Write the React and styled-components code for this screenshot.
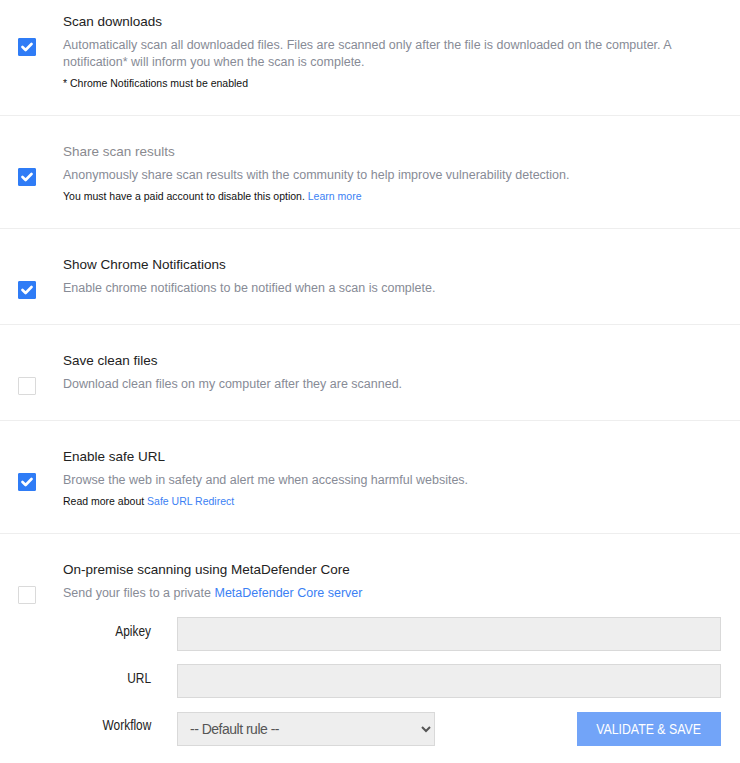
import React from "react";
import styled, { createGlobalStyle } from "styled-components";

const GlobalStyle = createGlobalStyle`
  body {
    margin: 0;
    background: #fff;
    font-family: "Liberation Sans", Arial, sans-serif;
    color: #222;
  }
`;

function Check({ checked }) {
  return (
    <CheckBox $checked={checked}>
      {checked && (
        <svg width="12" height="10" viewBox="0 0 12 10">
          <polyline
            points="1.5,5 4.6,8 10.5,2"
            fill="none"
            stroke="#fff"
            strokeWidth="2.6"
            strokeLinecap="round"
            strokeLinejoin="round"
          />
        </svg>
      )}
    </CheckBox>
  );
}

function App() {
  return (
    <Page>
      <GlobalStyle />
      <Section $first>
        <Check checked />
        <Content>
          <Title>Scan downloads</Title>
          <Desc>
            Automatically scan all downloaded files. Files are scanned only
            after the file is downloaded on the computer. A notification* will
            inform you when the scan is complete.
          </Desc>
          <Note>* Chrome Notifications must be enabled</Note>
        </Content>
      </Section>

      <Section>
        <Check checked />
        <Content>
          <Title $muted>Share scan results</Title>
          <Desc>
            Anonymously share scan results with the community to help improve
            vulnerability detection.
          </Desc>
          <Note>
            You must have a paid account to disable this option.{" "}
            <Link href="#">Learn more</Link>
          </Note>
        </Content>
      </Section>

      <Section>
        <Check checked />
        <Content>
          <Title>Show Chrome Notifications</Title>
          <Desc>
            Enable chrome notifications to be notified when a scan is complete.
          </Desc>
        </Content>
      </Section>

      <Section>
        <Check />
        <Content>
          <Title>Save clean files</Title>
          <Desc>Download clean files on my computer after they are scanned.</Desc>
        </Content>
      </Section>

      <Section>
        <Check checked />
        <Content>
          <Title>Enable safe URL</Title>
          <Desc>
            Browse the web in safety and alert me when accessing harmful
            websites.
          </Desc>
          <Note>
            Read more about <Link href="#">Safe URL Redirect</Link>
          </Note>
        </Content>
      </Section>

      <Section $last>
        <Check />
        <Content>
          <Title>On-premise scanning using MetaDefender Core</Title>
          <Desc>
            Send your files to a private{" "}
            <Link href="#">MetaDefender Core server</Link>
          </Desc>
          <Form>
            <Label>
              <Narrow>Apikey</Narrow>
            </Label>
            <Input type="text" />
            <Label>
              <Narrow>URL</Narrow>
            </Label>
            <Input type="text" />
            <Label>
              <Narrow>Workflow</Narrow>
            </Label>
            <Actions>
              <Select defaultValue="default">
                <option value="default">-- Default rule --</option>
              </Select>
              <Button type="button">
                <Narrow $center>Validate &amp; Save</Narrow>
              </Button>
            </Actions>
          </Form>
        </Content>
      </Section>
    </Page>
  );
}

const Page = styled.div`
  padding: 0 19px 0 18px;
`;

const Section = styled.section`
  display: flex;
  gap: 27px;
  margin: 0 -19px 0 -18px;
  padding: ${(p) => (p.$first ? "12px" : "26px")} 19px
    ${(p) => (p.$last ? "17px" : "24px")} 18px;
  border-bottom: ${(p) => (p.$last ? "none" : "1px solid #eee")};
`;

const CheckBox = styled.div`
  flex-shrink: 0;
  width: 18px;
  height: 18px;
  box-sizing: border-box;
  margin-top: 26px;
  border-radius: 1px;
  border: 1px solid ${(p) => (p.$checked ? "#2f7cf6" : "#dadada")};
  background: ${(p) => (p.$checked ? "#2f7cf6" : "#fff")};
  display: flex;
  align-items: center;
  justify-content: center;
`;

const Content = styled.div`
  flex: 1;
  min-width: 0;
`;

const Title = styled.div`
  font-size: 13.5px;
  line-height: 20px;
  color: ${(p) => (p.$muted ? "#8a8a8f" : "#222")};
`;

const Desc = styled.div`
  font-size: 12.5px;
  line-height: 17px;
  color: #878b96;
  margin: 5px 0 3px;
`;

const Note = styled.div`
  font-size: 10.5px;
  line-height: 16px;
  color: #111;
  margin-top: 4px;
`;

const Link = styled.a`
  color: #3b7ff4;
  text-decoration: none;
`;

const Form = styled.div`
  display: grid;
  grid-template-columns: 88px 1fr;
  column-gap: 26px;
  row-gap: 13px;
  margin-top: 15px;
`;

const Label = styled.label`
  text-align: right;
  font-size: 14px;
  line-height: 16px;
  padding-top: 6px;
  color: #222;
`;

const Narrow = styled.span`
  display: inline-block;
  transform: scaleX(${(p) => (p.$center ? 0.88 : 0.85)});
  transform-origin: ${(p) => (p.$center ? "center" : "right")};
  white-space: nowrap;
`;

const Input = styled.input`
  height: 34px;
  box-sizing: border-box;
  width: 100%;
  background: #eee;
  border: 1px solid #d9d9d9;
  outline: none;
  padding: 0 10px;
`;

const Actions = styled.div`
  display: flex;
  justify-content: space-between;
  align-items: center;
  margin-top: 1px;
`;

const Select = styled.select`
  width: 258px;
  height: 34px;
  box-sizing: border-box;
  background: #eee;
  border: 1px solid #d9d9d9;
  border-radius: 0;
  padding: 0 8px;
  font-family: "Liberation Sans", Arial, sans-serif;
  font-size: 14px;
  letter-spacing: -0.5px;
  color: #555;
`;

const Button = styled.button`
  width: 144px;
  height: 34px;
  border: none;
  padding: 0;
  background: #72a4f8;
  color: #fff;
  font-family: "Liberation Sans", Arial, sans-serif;
  font-size: 14px;
  text-transform: uppercase;
  cursor: pointer;
`;

export default App;
